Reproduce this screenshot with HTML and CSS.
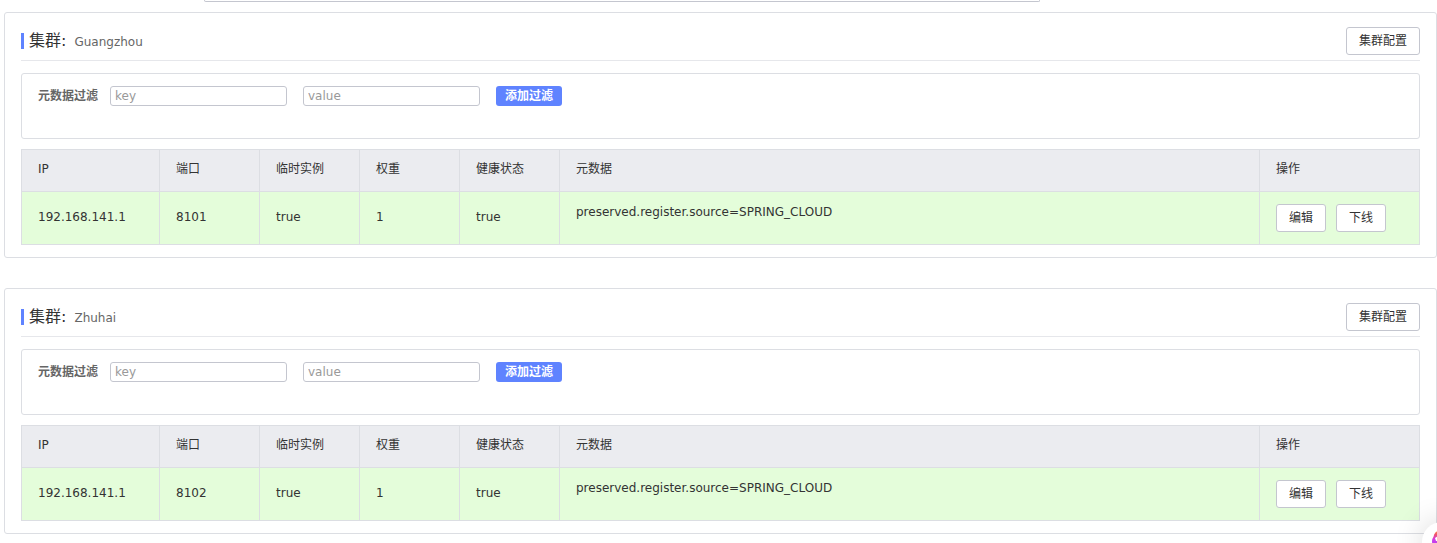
FILE: index.html
```
<!DOCTYPE html>
<html lang="zh-CN">
<head>
<meta charset="utf-8">
<title>服务详情</title>
<link rel="stylesheet" href="styles.css">
</head>
<body>
<main class="page">
  <div class="field-edge"></div>

  <section class="card">
    <header class="card-head">
      <h2 class="card-title">集群:<span class="card-subtitle">Guangzhou</span></h2>
      <button class="btn" type="button">集群配置</button>
    </header>
    <form class="filter">
      <label class="filter-label" for="key-gz">元数据过滤</label>
      <input class="filter-input" id="key-gz" type="text" placeholder="key">
      <input class="filter-input" type="text" placeholder="value" aria-label="value">
      <button class="btn-primary" type="button">添加过滤</button>
    </form>
    <table class="table">
      <thead>
        <tr><th class="col-ip">IP</th><th class="col-small">端口</th><th class="col-small">临时实例</th><th class="col-small">权重</th><th class="col-small">健康状态</th><th>元数据</th><th class="col-actions">操作</th></tr>
      </thead>
      <tbody>
        <tr>
          <td>192.168.141.1</td><td>8101</td><td>true</td><td>1</td><td>true</td>
          <td class="meta">preserved.register.source=SPRING_CLOUD</td>
          <td class="cell-actions"><div class="actions"><button class="btn" type="button">编辑</button><button class="btn" type="button">下线</button></div></td>
        </tr>
      </tbody>
    </table>
  </section>

  <section class="card">
    <header class="card-head">
      <h2 class="card-title">集群:<span class="card-subtitle">Zhuhai</span></h2>
      <button class="btn" type="button">集群配置</button>
    </header>
    <form class="filter">
      <label class="filter-label" for="key-zh">元数据过滤</label>
      <input class="filter-input" id="key-zh" type="text" placeholder="key">
      <input class="filter-input" type="text" placeholder="value" aria-label="value">
      <button class="btn-primary" type="button">添加过滤</button>
    </form>
    <table class="table">
      <thead>
        <tr><th class="col-ip">IP</th><th class="col-small">端口</th><th class="col-small">临时实例</th><th class="col-small">权重</th><th class="col-small">健康状态</th><th>元数据</th><th class="col-actions">操作</th></tr>
      </thead>
      <tbody>
        <tr>
          <td>192.168.141.1</td><td>8102</td><td>true</td><td>1</td><td>true</td>
          <td class="meta">preserved.register.source=SPRING_CLOUD</td>
          <td class="cell-actions"><div class="actions"><button class="btn" type="button">编辑</button><button class="btn" type="button">下线</button></div></td>
        </tr>
      </tbody>
    </table>
  </section>
</main>

<div class="assistant">
  <svg class="assistant-logo" viewBox="0 0 24 24" aria-hidden="true">
    <defs>
      <linearGradient id="flame" x1="0" y1="0" x2="0" y2="1">
        <stop offset="0" stop-color="#ff9a3c"/>
        <stop offset="0.2" stop-color="#f0506e"/>
        <stop offset="0.4" stop-color="#d23ce6"/>
        <stop offset="1" stop-color="#8a4dff"/>
      </linearGradient>
    </defs>
    <path fill="url(#flame)" d="M12 0C8 0 5 2 4 5c0 2-2 3-2 6 0 8 4 12 10 12s10-4 10-12c0-3-2-4-2-6-1-3-4-5-8-5z"/>
    <path fill="#fff" d="M5 8l3-2 5 2v3H6z"/>
  </svg>
</div>
</body>
</html>
```

FILE: styles.css
```
* {
  box-sizing: border-box;
}

body {
  margin: 0;
  height: 100vh;
  overflow: hidden;
  background: #fff;
  color: #333;
  font: 12px/16px "DejaVu Sans", "Noto Sans CJK SC", sans-serif;
}

button,
input {
  font: inherit;
}

.page {
  padding-left: 4px;
}

/* lower edge of the field scrolled off the top */
.field-edge {
  height: 2px;
  margin: 0 397px 10px 200px;
  border: 1px solid #c4c6cf;
  border-top: 0;
  border-radius: 0 0 3px 3px;
}

.card {
  margin-bottom: 30px;
  padding: 14px 16px 12px;
  border: 1px solid #dcdee3;
  border-radius: 3px;
}

.card-head {
  display: flex;
  justify-content: space-between;
  align-items: center;
  padding-bottom: 5px;
  border-bottom: 1px solid #e6e7eb;
}

.card-title {
  display: flex;
  align-items: baseline;
  gap: 8px;
  margin: 0;
  padding-left: 5px;
  border-left: 3px solid #5f83ff;
  height: 16px;
  font-size: 16px;
  font-weight: 400;
  line-height: 16px;
}

.card-subtitle {
  color: #666;
  font-size: 12px;
}

.btn {
  height: 28px;
  padding: 0 12px;
  border: 1px solid #c4c6cf;
  border-radius: 3px;
  background: #fff;
  color: #333;
}

.filter {
  display: flex;
  gap: 16px;
  margin: 12px 0 10px;
  padding: 12px 16px 32px;
  border: 1px solid #dcdee3;
  border-radius: 3px;
}

.filter-label {
  margin-right: -4px;
  color: #666;
  font-weight: 700;
  line-height: 20px;
}

.filter-input {
  width: 177px;
  height: 20px;
  padding: 0 4px;
  border: 1px solid #c4c6cf;
  border-radius: 3px;
  background: #fff;
  color: #333;
}

.filter-input::placeholder {
  color: #999;
}

.btn-primary {
  height: 20px;
  padding: 0 9px;
  border: 0;
  border-radius: 3px;
  background: #5f83ff;
  color: #fff;
  font-weight: 700;
  line-height: 20px;
}

.table {
  width: 100%;
  table-layout: fixed;
  border: 1px solid #dcdee3;
  border-width: 1px 0 0 1px;
  border-spacing: 0;
}

.table th,
.table td {
  padding: 11px 16px 14px;
  border: 1px solid #dcdee3;
  border-width: 0 1px 1px 0;
  text-align: left;
}

.table th {
  background: #ebecf0;
  font-weight: 400;
}

.table td {
  background: #e4fdda;
}

.table .meta {
  padding-top: 12px;
  vertical-align: top;
}

.table .cell-actions {
  padding: 12px 16px;
}

.col-ip {
  width: 138px;
}

.col-small {
  width: 100px;
}

.col-actions {
  width: 160px;
}

.actions {
  display: flex;
  gap: 10px;
}

/* floating assistant, partly beyond the window corner */
.assistant {
  position: fixed;
  right: -25px;
  bottom: -19px;
  width: 40px;
  height: 40px;
  padding: 8px;
  border-radius: 50%;
  background: #fff;
  box-shadow: 0 0 30px rgba(0, 0, 0, 0.16);
}

.assistant-logo {
  display: block;
}
```
